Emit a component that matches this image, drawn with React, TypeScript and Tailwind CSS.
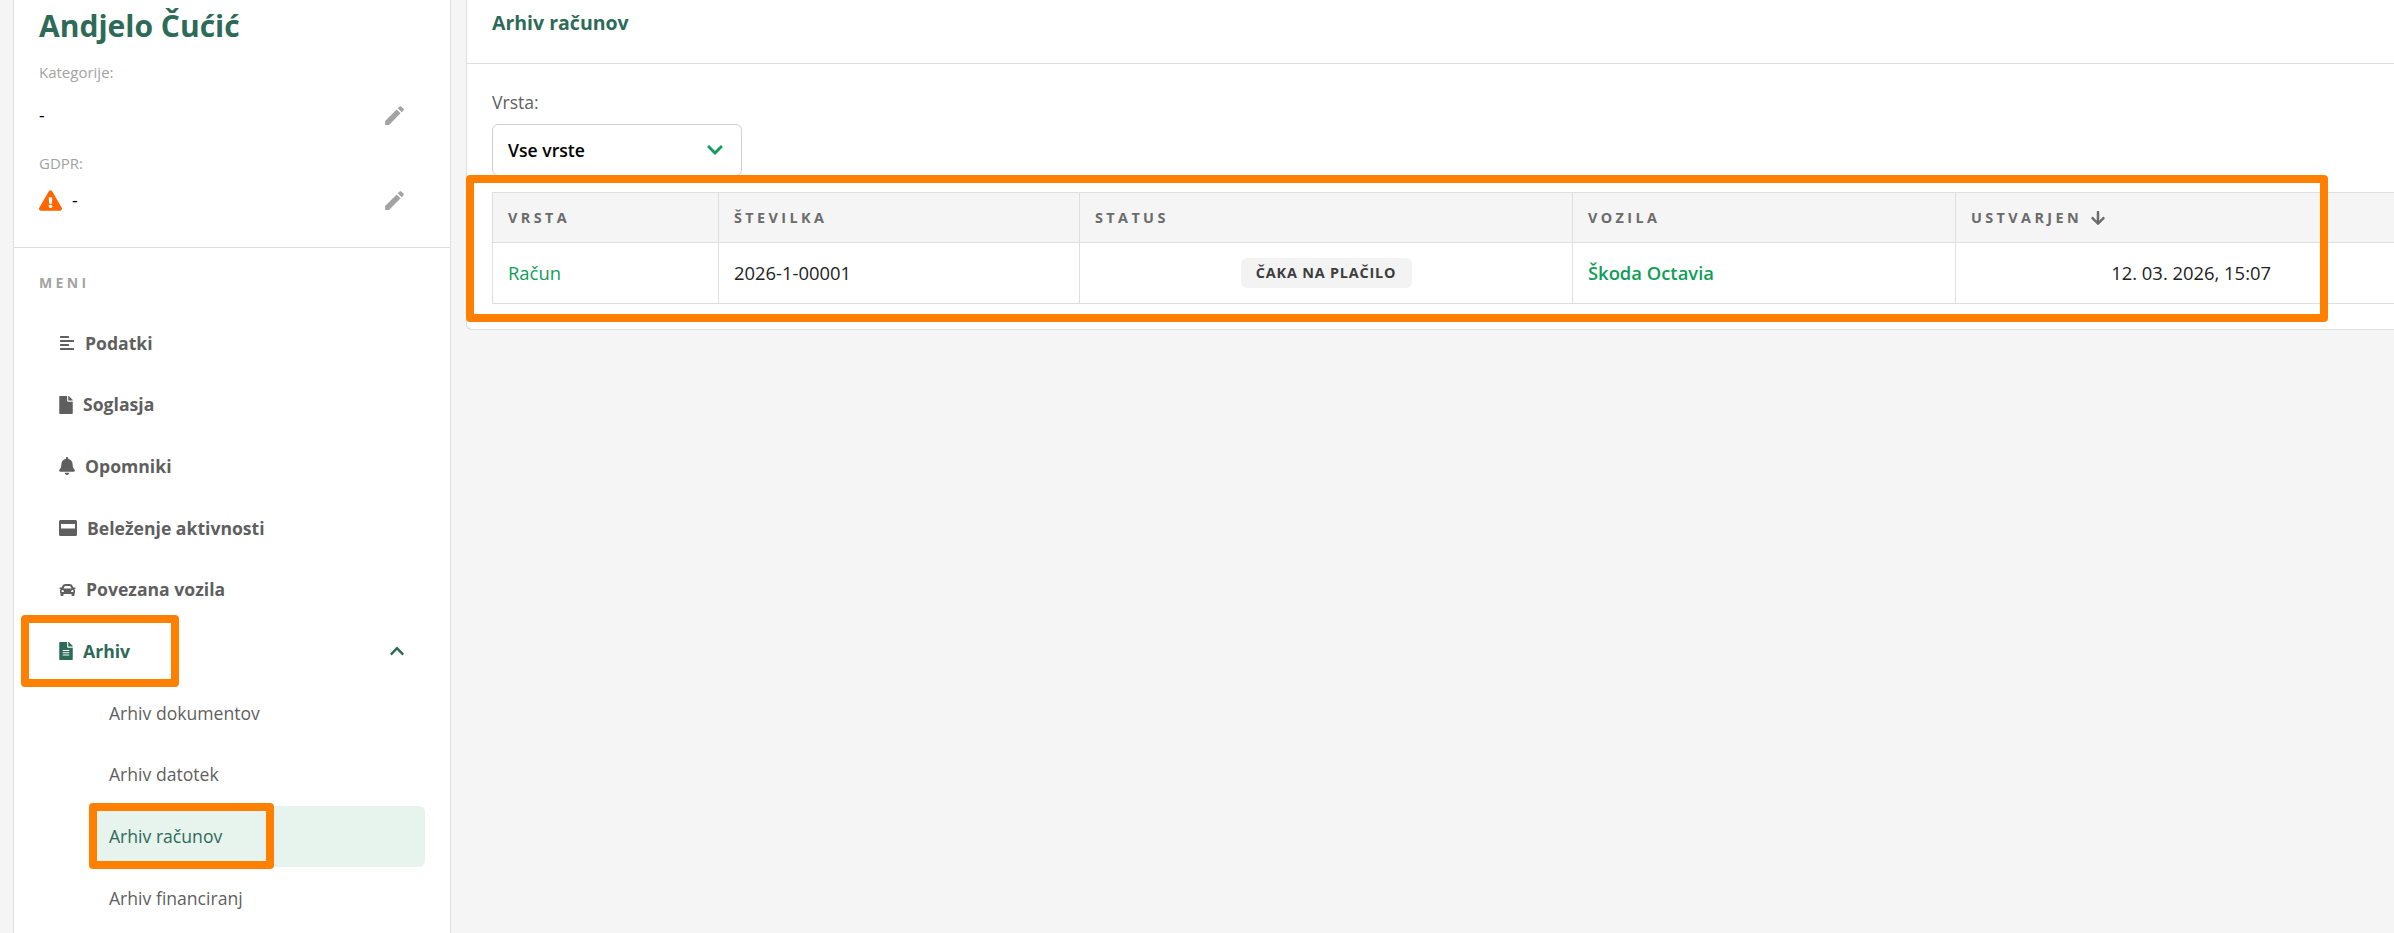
import React from "react";
import { FaAlignLeft, FaFile, FaBell, FaCar, FaFileAlt, FaExclamationTriangle, FaChevronUp, FaChevronDown, FaArrowDown } from "react-icons/fa";
import { MdEdit } from "react-icons/md";

function CardIcon() {
  return (
    <svg viewBox="0 0 18 16" className="w-[18px] h-[16px]" fill="currentColor">
      <path d="M1.5 0h15A1.5 1.5 0 0 1 18 1.5v13a1.5 1.5 0 0 1-1.5 1.5h-15A1.5 1.5 0 0 1 0 14.500v-13A1.500 1.500 0 0 1 1.500 0zM2 4v4.500h14V4z" fillRule="evenodd" />
    </svg>
  );
}

const menu = [
  { label: "Podatki", icon: <FaAlignLeft className="w-4 h-4" />, gap: "gap-[10px]" },
  { label: "Soglasja", icon: <FaFile className="w-[14px] h-[18px]" />, gap: "gap-[10px]" },
  { label: "Opomniki", icon: <FaBell className="w-4 h-[18px]" />, gap: "gap-[10px]" },
  { label: "Beleženje aktivnosti", icon: <CardIcon />, gap: "gap-[10px]" },
  { label: "Povezana vozila", icon: <FaCar className="w-[17px] h-[16px]" />, gap: "gap-[10px]" },
];

const subs = ["Arhiv dokumentov", "Arhiv datotek", "Arhiv računov", "Arhiv financiranj"];

function Overlay({ cls }: { cls: string }) {
  return <div className={"absolute border-[8px] border-[#ff8000] rounded-[4px] pointer-events-none " + cls} />;
}

export default function App() {
  return (
    <div className="relative flex h-[933px] w-[2394px] overflow-hidden bg-[#f5f5f5] font-['Open_Sans','Noto_Sans',sans-serif] text-[17.6px]">
      <aside className="ml-[13px] w-[438px] shrink-0 bg-white border-x border-[#dedede] flex flex-col">
        <div className="h-[248px] shrink-0 border-b border-[#dedede] px-[25px] pt-[6px]">
          <h1 className="text-[30px] leading-[40px] font-bold text-[#2d6a58]">Andjelo Čućić</h1>
          <div className="mt-[16px] text-[15px] leading-[20px] text-[#a3a3a3]">Kategorije:</div>
          <div className="mt-[21px] flex items-center justify-between h-[24px] pr-[18px] text-black">
            <span>-</span>
            <MdEdit className="w-[25px] h-[25px] text-[#a3a3a3]" />
          </div>
          <div className="mt-[26px] text-[15px] leading-[20px] text-[#a3a3a3]">GDPR:</div>
          <div className="mt-[15px] flex items-center justify-between h-[24px] pr-[18px] text-black">
            <span className="flex items-center gap-[10px]">
              <FaExclamationTriangle className="w-[23px] h-[21px] text-[#ff6600]" />
              <span>-</span>
            </span>
            <MdEdit className="w-[25px] h-[25px] text-[#a3a3a3]" />
          </div>
        </div>
        <div className="px-[25px] pt-[25px] text-[14px] leading-[20px] font-bold tracking-[3.4px] text-[#a3a3a3]">MENI</div>
        <nav className="mt-[19px] flex flex-col">
          {menu.map((m) => (
            <div key={m.label} className={"h-[61.7px] flex items-center pl-[45px] font-bold text-[#5f5f5f] " + m.gap}>
              {m.icon}
              <span>{m.label}</span>
            </div>
          ))}
          <div className="h-[61.7px] flex items-center justify-between pl-[45px] pr-[45px] font-bold text-[#2d6a58]">
            <span className="flex items-center gap-[10px]">
              <FaFileAlt className="w-[14px] h-[18px]" />
              <span>Arhiv</span>
            </span>
            <FaChevronUp className="w-[16px] h-[16px]" />
          </div>
          {subs.map((s) => (
            <div
              key={s}
              className={
                "h-[61.7px] ml-[78px] mr-[25px] flex items-center pl-[17px] rounded-[6px] " +
                (s === "Arhiv računov" ? "bg-[#e7f3ed] text-[#2d6a58]" : "text-[#5f5f5f]")
              }
            >
              {s}
            </div>
          ))}
        </nav>
      </aside>

      <main className="ml-[15px] flex-1 self-start h-[330px] bg-white border-l border-b border-[#dedede] rounded-bl-[6px]">
        <div className="h-[64px] border-b border-[#dedede] px-[25px] pt-[8px] text-[19.500px] leading-[30px] font-bold text-[#2d6a58]">
          Arhiv računov
        </div>
        <div className="px-[25px] pt-[26px]">
          <label className="block text-[17.600px] leading-[24px] text-[#5f5f5f]">Vrsta:</label>
          <div className="mt-[10px] w-[250px] h-[52px] border border-[#cfcfcf] rounded-[6px] flex items-center justify-between pl-[15px] pr-[17px] font-semibold text-black">
            <span>Vse vrste</span>
            <FaChevronDown className="w-[18px] h-[18px] text-[#0f9d58]" />
          </div>
          <div className="mt-[16px] -mr-[25px] border-y border-l border-[#dedede]">
            <div className="grid grid-cols-[225px_361px_493px_383px_1fr] h-[50px] bg-[#f5f5f5] border-b border-[#dedede] text-[14.400px] font-bold tracking-[3.4px] text-[#6b6b6b]">
              <div className="flex items-center pl-[15px]">VRSTA</div>
              <div className="flex items-center pl-[15px] border-l border-[#dedede]">ŠTEVILKA</div>
              <div className="flex items-center pl-[15px] border-l border-[#dedede]">STATUS</div>
              <div className="flex items-center pl-[15px] border-l border-[#dedede]">VOZILA</div>
              <div className="flex items-center pl-[15px] gap-[8px] border-l border-[#dedede]">
                USTVARJEN <FaArrowDown className="w-[16px] h-[16px]" />
              </div>
            </div>
            <div className="grid grid-cols-[225px_361px_493px_383px_1fr] h-[60px] text-[18.400px] text-[#222222]">
              <div className="flex items-center pl-[15px] font-medium text-[#0f9d58]">Račun</div>
              <div className="flex items-center pl-[15px] border-l border-[#dedede]">2026-1-00001</div>
              <div className="flex items-center justify-center border-l border-[#dedede]">
                <span className="h-[30px] w-[171px] flex items-center justify-center rounded-[6px] bg-[#f3f3f3] text-[14.400px] font-bold tracking-[0.8px] text-[#3d3d3d]">
                  ČAKA NA PLAČILO
                </span>
              </div>
              <div className="flex items-center pl-[15px] font-semibold border-l border-[#dedede] text-[#0f9d58]">Škoda Octavia</div>
              <div className="flex items-center justify-end pr-[123px] border-l border-[#dedede]">12. 03. 2026, 15:07</div>
            </div>
          </div>
        </div>
      </main>

      <Overlay cls="left-[21px] top-[615px] w-[158px] h-[72px]" />
      <Overlay cls="left-[89px] top-[803px] w-[185px] h-[66px]" />
      <Overlay cls="left-[466px] top-[175px] w-[1862px] h-[147px]" />
    </div>
  );
}
